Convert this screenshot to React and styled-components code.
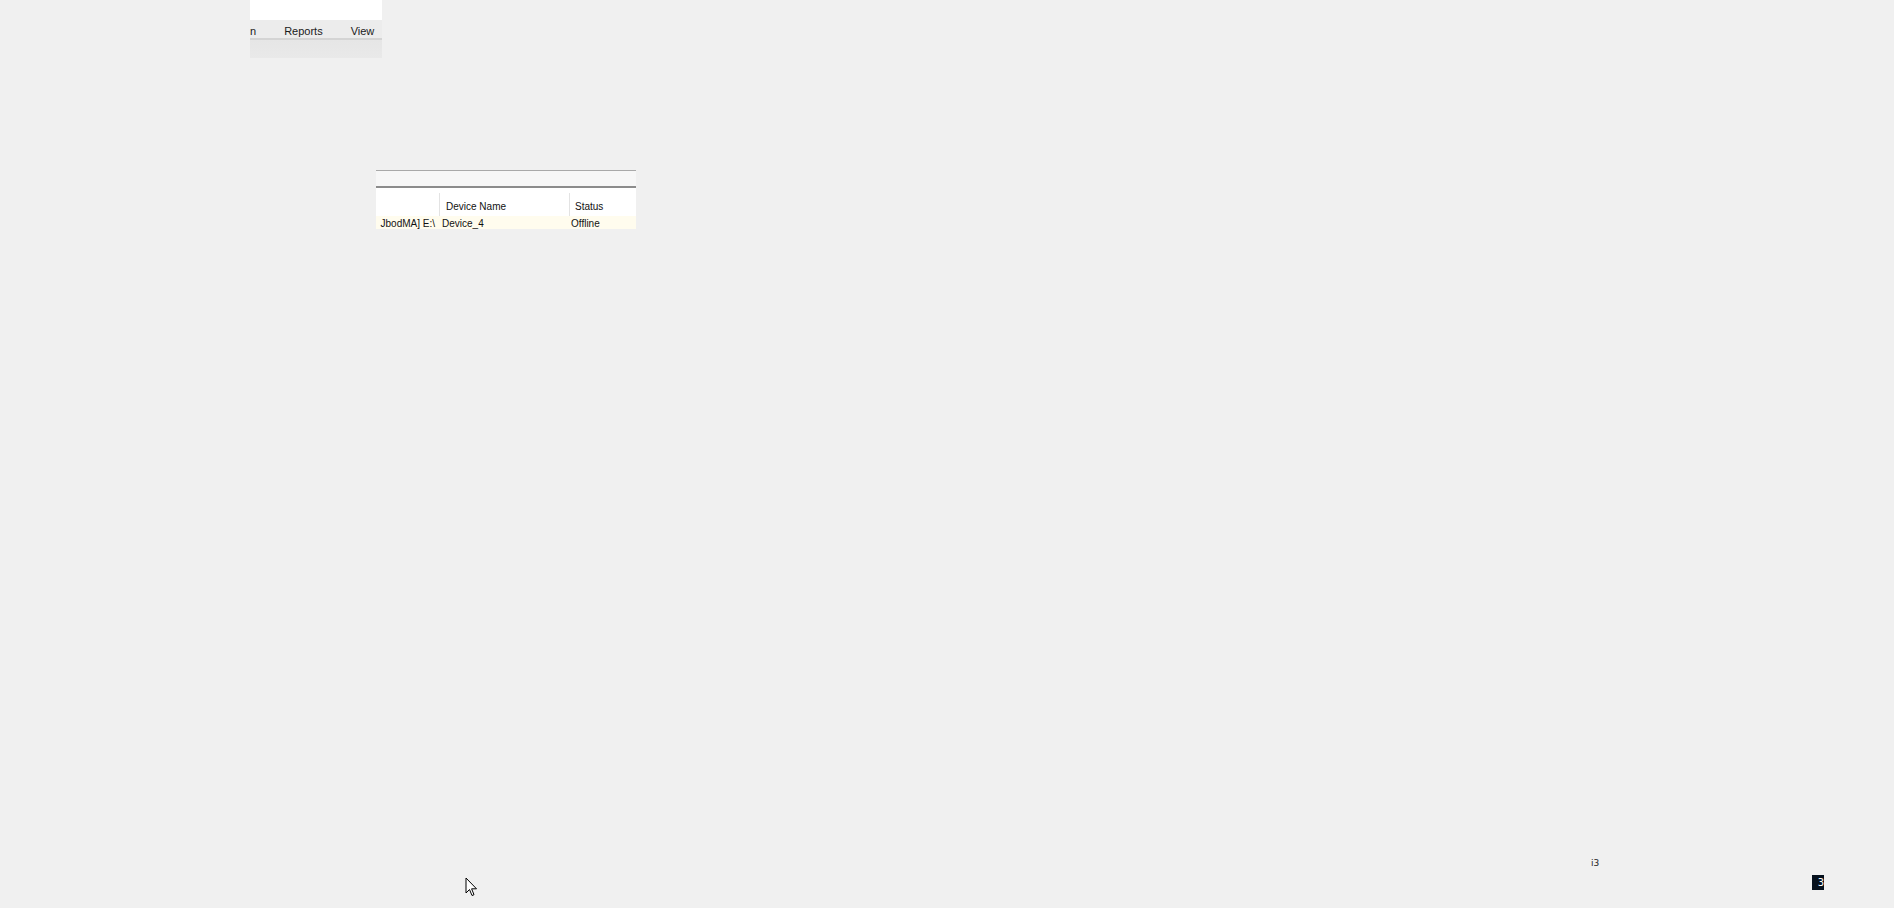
import React from 'react';
import styled, {createGlobalStyle} from 'styled-components';

const Global = createGlobalStyle`
  html, body {
    margin: 0;
    padding: 0;
    background: #f0f0f0;
    font-family: "Liberation Sans", Arial, sans-serif;
  }
`;

const Desktop = styled.div`
  position: relative;
  width: 1894px;
  height: 908px;
  overflow: hidden;
  background: #f0f0f0;
`;

// fragments of windows sit on the desktop at their own place
const Fragment = styled.div`
  position: absolute;
  left: ${p => p.x}px;
  top: ${p => p.y}px;
  width: ${p => p.w}px;
  display: flex;
  flex-direction: column;
`;

const TitleStrip = styled.div`
  height: 20px;
  background: #ffffff;
`;

const MenuBar = styled.div`
  height: 18px;
  background: #ececec;
  border-bottom: 2px solid #d4d4d4;
  display: flex;
  align-items: center;
  font-size: 11px;
  color: #1a1a1a;
  overflow: hidden;
`;

const MenuItem = styled.span`
  margin-left: ${p => p.gap}px;
  white-space: nowrap;
  line-height: 18px;
  padding-top: 3px;
`;

const ToolStrip = styled.div`
  height: 18px;
  background: linear-gradient(#e6e6e6, #e9e9e9);
`;

const TopRule = styled.div`
  height: 1px;
  background: #a9a9a9;
`;

const FilterStrip = styled.div`
  height: 15px;
  background: #f7f7f7;
  border-bottom: 2px solid #8c8c8c;
`;

const Row = styled.div`
  display: grid;
  grid-template-columns: 64px 130px 1fr;
  height: ${p => p.h}px;
  background: ${p => p.bg};
  font-size: 10px;
  color: #111;
  overflow: hidden;
`;

const Cell = styled.div`
  display: flex;
  align-items: ${p => (p.head ? 'flex-end' : 'center')};
  padding-left: ${p => p.pad || 0}px;
  padding-bottom: ${p => (p.head ? 4 : 0)}px;
  padding-top: ${p => (p.head ? 0 : 1)}px;
  white-space: nowrap;
  overflow: hidden;
  justify-content: ${p => (p.right ? 'flex-end' : 'flex-start')};
  padding-right: ${p => (p.right ? 5 : 0)}px;
  border-right: ${p => (p.sep ? '1px solid #e3e3e3' : 'none')};
  margin: ${p => (p.sep ? '5px 0 0 0' : '0')};
`;

const Tray = styled.span`
  position: absolute;
  left: ${p => p.x}px;
  top: ${p => p.y}px;
  font-size: 9px;
  line-height: 9px;
  color: #222;
  font-family: "DejaVu Sans", sans-serif;
`;

const Badge = styled.span`
  position: absolute;
  left: 1812px;
  top: 875px;
  width: 12px;
  height: 15px;
  background: #06101c;
  color: #fff;
  font-size: 10px;
  line-height: 15px;
  text-align: right;
  font-family: "DejaVu Sans", sans-serif;
  overflow: hidden;
`;

const Pointer = styled.svg`
  position: absolute;
  left: 465px;
  top: 877px;
`;

export default function App() {
  return (
    <Desktop>
      <Global />
      <Fragment x={250} y={0} w={132}>
        <TitleStrip />
        <MenuBar>
          <MenuItem gap={0}>n</MenuItem>
          <MenuItem gap={28}>Reports</MenuItem>
          <MenuItem gap={28}>View</MenuItem>
        </MenuBar>
        <ToolStrip />
      </Fragment>

      <Fragment x={376} y={170} w={260}>
        <TopRule />
        <FilterStrip />
        <Row h={28} bg="#ffffff">
          <Cell head sep />
          <Cell head sep pad={6}>Device Name</Cell>
          <Cell head pad={5}>Status</Cell>
        </Row>
        <Row h={13} bg="#fffcee">
          <Cell right>JbodMA] E:\</Cell>
          <Cell pad={2}>Device_4</Cell>
          <Cell pad={1}>Offline</Cell>
        </Row>
      </Fragment>

      <Tray x={1591} y={859}>i3</Tray>
      <Badge>3</Badge>

      <Pointer width="13" height="21" viewBox="0 0 13 21">
        <path
          d="M1 1 L1 16 L4.5 12.5 L7 18.5 L9 17.7 L6.6 11.8 L11.5 11.8 Z"
          fill="#ffffff"
          stroke="#000000"
          strokeWidth="1"
          strokeLinejoin="miter"
        />
      </Pointer>
    </Desktop>
  );
}
